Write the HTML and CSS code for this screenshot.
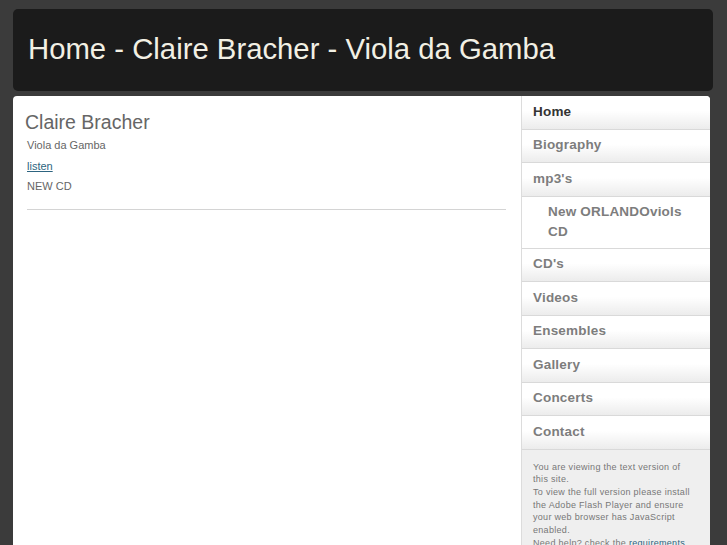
FILE: index.html
```html
<!DOCTYPE html>
<html>
<head>
<meta charset="utf-8">
<link rel="stylesheet" href="styles.css">
</head>
<body>
<div class="page">
  <header class="top"><h1 class="site-title">Home - Claire Bracher - Viola da Gamba</h1></header>
  <div class="main">
    <div class="content">
      <h2 class="name">Claire Bracher</h2>
      <p class="line">Viola da Gamba</p>
      <p class="line"><a href="#" class="link">listen</a></p>
      <p class="line">NEW CD</p>
      <hr class="rule">
    </div>
    <aside class="side">
      <nav class="menu">
        <a class="item current" href="#">Home</a>
        <a class="item" href="#">Biography</a>
        <a class="item" href="#">mp3's</a>
        <a class="item sub" href="#">New ORLANDOviols CD</a>
        <a class="item" href="#">CD's</a>
        <a class="item" href="#">Videos</a>
        <a class="item" href="#">Ensembles</a>
        <a class="item" href="#">Gallery</a>
        <a class="item" href="#">Concerts</a>
        <a class="item" href="#">Contact</a>
      </nav>
      <div class="info">
        You are viewing the text version of this site.<br>
        To view the full version please install the Adobe Flash Player and ensure your web browser has JavaScript enabled.<br>
        Need help? check the <a href="#" class="req">requirements</a> page.
      </div>
    </aside>
  </div>
</div>
</body>
</html>
```
FILE: styles.css
```css
html, body {
  margin: 0;
  padding: 0;
  background: #3b3b3b;
  height: 100%;
  overflow: hidden;
}
body {
  font-family: "Liberation Sans", Arial, sans-serif;
}
.page {
  padding: 9px 14px 0 13px;
}
.top {
  background: #1b1b1b;
  height: 82px;
  border-radius: 5px;
  display: flex;
  align-items: center;
  padding-left: 15px;
}
.site-title {
  margin: 0;
  font-weight: normal;
  font-size: 29.3px;
  color: #f2f0e4;
  padding-bottom: 2px;
}
.main {
  margin-top: 5px;
  width: 697px;
  background: #fff;
  border-radius: 4px 4px 0 0;
  display: flex;
  min-height: 460px;
}
.content {
  flex: 1;
  padding: 13px 15px 0 14px;
}
.name {
  margin: 0 0 0 -2px;
  font-weight: normal;
  font-size: 19.5px;
  color: #666;
  line-height: 26px;
}
.line {
  margin: 0;
  font-size: 11px;
  color: #666;
  line-height: 20.5px;
}
.link {
  color: #2d6480;
}
.rule {
  margin: 12px 0 0 0;
  border: 0;
  border-top: 1px solid #d4d4d4;
}
.side {
  width: 188px;
  border-left: 1px solid #dcdcdc;
  border-top-right-radius: 4px;
  overflow: hidden;
}
.menu {
  display: flex;
  flex-direction: column;
}
.item {
  display: block;
  padding: 7.5px 12px 8.5px 11px;
  line-height: 16.5px;
  font-size: 13.5px;
  font-weight: bold;
  color: #7d7d7d;
  text-decoration: none;
  border-bottom: 1px solid #d9d9d9;
  background: linear-gradient(#ffffff 0%, #ffffff 45%, #ececec 100%);
  letter-spacing: 0.2px;
}
.item.current {
  color: #333;
}
.item.sub {
  background: #fff;
  padding: 5.5px 12px 5.5px 26px;
  line-height: 20px;
}
.info {
  background: #efefef;
  padding: 11px 12px 0 11px;
  font-size: 9px;
  line-height: 12.7px;
  color: #777;
  letter-spacing: 0.3px;
  min-height: 120px;
}
.req {
  color: #2d6480;
  text-decoration: none;
}
```
